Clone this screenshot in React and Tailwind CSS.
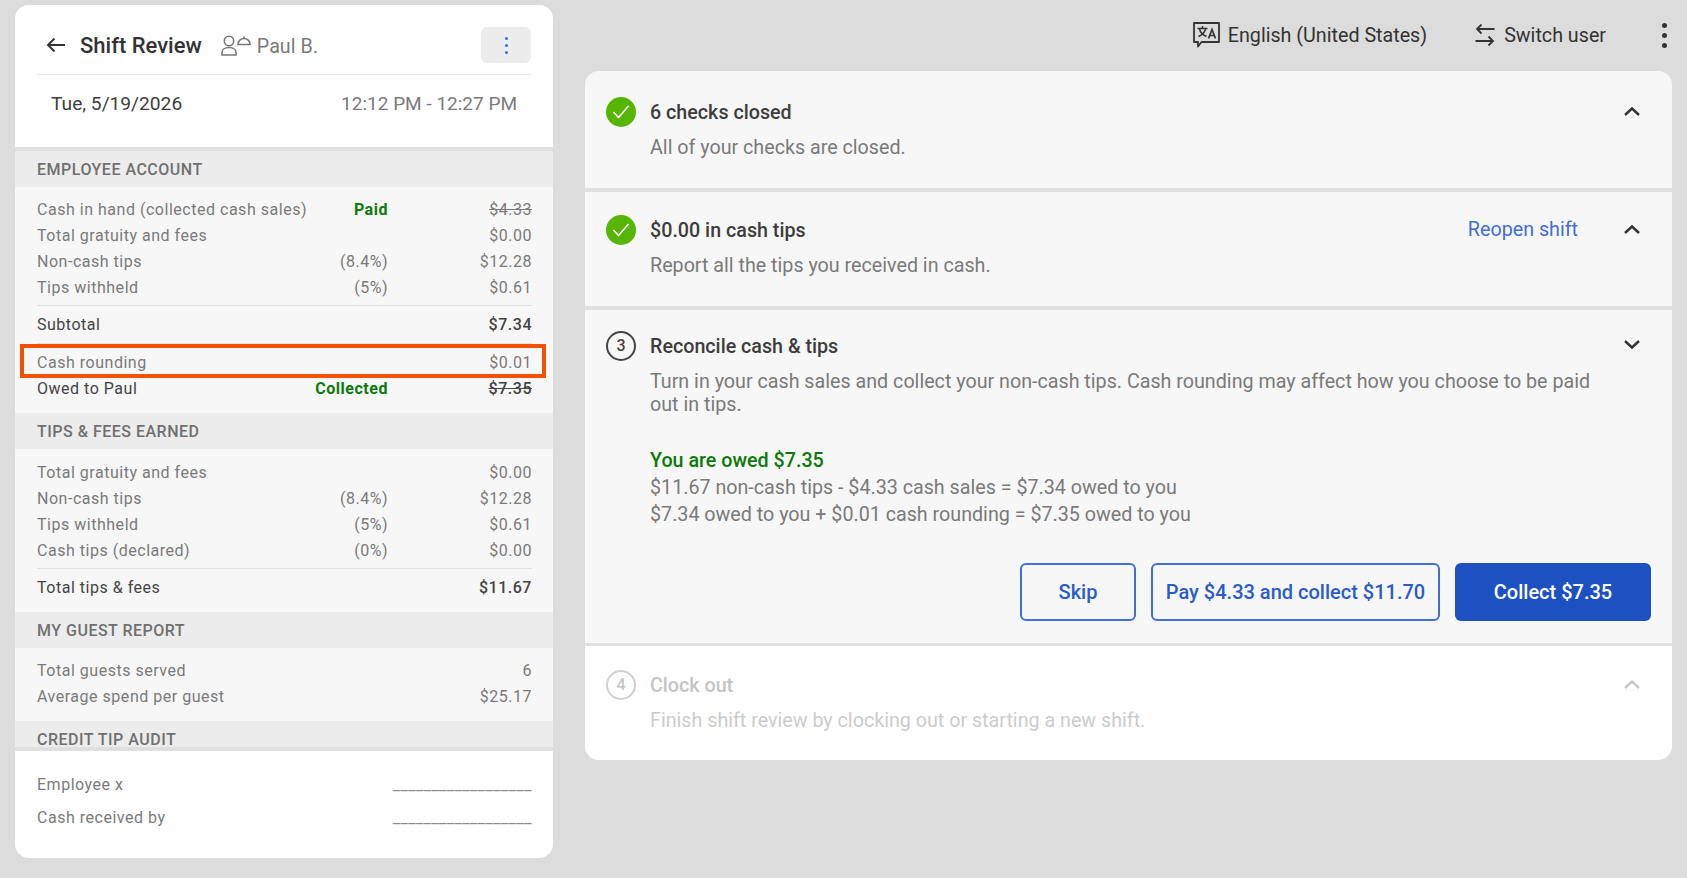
const ROW_LABEL = "text-[#7a7a7a]";

function Row({ label, mid, midClass = "", value, valueClass = "", labelClass = ROW_LABEL }) {
  return (
    <div className="flex h-[26px] items-center pl-[22px] pr-[21px] text-base tracking-[0.52px]">
      <span className={`min-w-0 flex-1 whitespace-nowrap ${labelClass}`}>{label}</span>
      <span className={`w-[120px] whitespace-nowrap text-right ${midClass || "text-[#7a7a7a]"}`}>{mid}</span>
      <span className={`w-[144px] text-right ${valueClass || "text-[#7a7a7a]"}`}>{value}</span>
    </div>
  );
}

function TotalRow({ label, value }) {
  return (
    <div className="ml-[22px] mr-[21px] flex h-[38px] items-center justify-between border-t border-[#e0e0e0] pt-[1px] text-base tracking-[0.52px] text-[#444]">
      <span>{label}</span>
      <span className="font-medium">{value}</span>
    </div>
  );
}

function SectionHead({ children }) {
  return (
    <div className="flex h-[36px] shrink-0 items-center bg-[#ececec] px-[22px] pt-[1px] text-base font-medium tracking-[0.5px] text-[#707070]">
      {children}
    </div>
  );
}

function ServerIcon() {
  return (
    <svg width="30" height="22" viewBox="0 0 30 22" fill="none" stroke="#777" strokeWidth="1.6">
      <circle cx="8" cy="7" r="4.7" />
      <path d="M1 21v-2.500c0-3 3-5 7-5s7 2 7 5V21Z" />
      <path d="M17 10.500c0-3.500 2.800-6 6-6s6 2.500 6 6Z" />
      <path d="M23 4.500V2.500" />
    </svg>
  );
}

function TranslateIcon() {
  return (
    <svg width="27" height="26" viewBox="0 0 27 26" fill="none" stroke="#333" strokeWidth="1.800">
      <path d="M1 1h25v19H8.500L5 24.500V20H1Z" strokeLinejoin="round" />
      <path d="M4.500 6.500h10M9.500 4v2.500M6.500 7c.8 3.500 3.500 6 7 7.500M12.500 7c-.8 3.500-3.500 6-7 7.500" strokeWidth="1.500" />
      <path d="M15.500 16.500l3.500-9 3.500 9M16.700 13.500h4.600" strokeWidth="1.700" />
    </svg>
  );
}

function SwapIcon() {
  return (
    <svg width="20" height="24" viewBox="0 0 20 24" fill="none" stroke="#333" strokeWidth="1.800">
      <path d="M19.500 5H2M6.500.500 2 5l4.500 4.500" />
      <path d="M.500 17H18M13.500 12.500 18 17l-4.500 4.500" />
    </svg>
  );
}

function Chevron({ up = true, color = "#333" }) {
  return (
    <svg width="16" height="10" viewBox="0 0 16 10" fill="none" stroke={color} strokeWidth="2.400">
      <path d={up ? "M1 9 8 2.500 15 9" : "M1 1l7 6.500L15 1"} />
    </svg>
  );
}

function Done() {
  return (
    <span className="flex h-[30px] w-[30px] shrink-0 items-center justify-center rounded-full bg-[#56b500]">
      <svg width="18" height="14" viewBox="0 0 18 14" fill="none" stroke="#fff" strokeWidth="1.600">
        <path d="M1.500 7 6.500 12.500 16.500 1" />
      </svg>
    </span>
  );
}

function Numbered({ n, muted }) {
  return (
    <span
      className={`flex h-[30px] w-[30px] shrink-0 items-center justify-center rounded-full border-2 text-base font-medium ${
        muted ? "border-[#d0d0d0] text-[#c4c4c4]" : "border-[#444] text-[#444]"
      }`}
    >
      {n}
    </span>
  );
}

function Step({ icon, title, sub, right, chevronUp = true, muted, className = "", children }) {
  return (
    <section className={`px-[21px] ${muted ? "bg-white" : "bg-[#f7f7f7]"} ${className}`}>
      <div className="flex items-center">
        {icon}
        <h3 className={`ml-[14px] flex-1 pt-[2px] text-[19.7px] font-medium ${muted ? "text-[#c4c4c4]" : "text-[#3d3d3d]"}`}>{title}</h3>
        {right}
        <span className="mb-[2px] ml-[46px] mr-[11px] flex w-[16px]">
          <Chevron up={chevronUp} color={muted ? "#c8c8c8" : "#333"} />
        </span>
      </div>
      <div className="pl-[44px] pt-[8px]">
        <p className={`pr-[40px] text-[19.7px] leading-[23px] ${muted ? "text-[#cccccc]" : "text-[#7a7a7a]"}`}>{sub}</p>
        {children}
      </div>
    </section>
  );
}

export default function App() {
  return (
    <div className="flex h-[878px] w-[1687px] overflow-hidden bg-[#dcdcdc] font-['Roboto',sans-serif]">
      {/* Shift receipt */}
      <aside className="relative ml-[15px] mt-[5px] flex h-[853px] w-[538px] flex-col overflow-hidden rounded-[14px] bg-white">
        <div className="h-[142px] shrink-0">
          <div className="mx-[22px] flex h-[70px] items-center border-b border-[#e6e6e6] pt-[11px]">
            <svg className="ml-[9px]" width="19" height="16" viewBox="0 0 19 16" fill="none" stroke="#333" strokeWidth="2">
              <path d="M19 8H2M8.500 1.500 2 8l6.500 6.500" />
            </svg>
            <h1 className="ml-[15px] text-[22px] font-medium text-[#333]">Shift Review</h1>
            <span className="ml-[19px]"><ServerIcon /></span>
            <span className="ml-[6px] flex-1 pt-[3px] text-[19.7px] text-[#7a7a7a]">Paul B.</span>
            <button className="flex h-[36px] w-[50px] items-center justify-center rounded-md bg-[#ececec]">
              <span className="flex flex-col gap-[4px]">
                <i className="h-[3px] w-[3px] rounded-full bg-[#3f6fd8]" />
                <i className="h-[3px] w-[3px] rounded-full bg-[#3f6fd8]" />
                <i className="h-[3px] w-[3px] rounded-full bg-[#3f6fd8]" />
              </span>
            </button>
          </div>
          <div className="flex items-center justify-between px-[36px] pt-[15px]">
            <span className="text-[19.2px] text-[#3d3d3d]">Tue, 5/19/2026</span>
            <span className="text-[19px] text-[#7a7a7a]">12:12 PM - 12:27 PM</span>
          </div>
        </div>

        <div className="h-[4px] shrink-0 bg-[#e0e0e0]" />

        <div className="h-[596px] shrink-0 overflow-hidden bg-[#f7f7f7]">
          <SectionHead>EMPLOYEE ACCOUNT</SectionHead>
          <div className="pb-[4px] pt-[10px]">
            <Row label="Cash in hand (collected cash sales)" mid="Paid" midClass="font-bold text-[#0b7a0b]" value="$4.33" valueClass="text-[#7a7a7a] line-through" />
            <Row label="Total gratuity and fees" value="$0.00" />
            <Row label="Non-cash tips" mid="(8.4%)" value="$12.28" />
            <Row label="Tips withheld" mid="(5%)" value="$0.61" />
          </div>
          <TotalRow label="Subtotal" value="$7.34" />
          <div className="ml-[22px] mr-[21px] border-t border-[#e0e0e0]" />
          <div className="pb-[11px] pt-[6px]">
            <Row label="Cash rounding" value="$0.01" />
            <Row label="Owed to Paul" labelClass="text-[#444]" mid="Collected" midClass="font-bold text-[#0b7a0b]" value="$7.35" valueClass="font-medium text-[#444] line-through" />
          </div>

          <SectionHead>TIPS &amp; FEES EARNED</SectionHead>
          <div className="pb-[4px] pt-[11px]">
            <Row label="Total gratuity and fees" value="$0.00" />
            <Row label="Non-cash tips" mid="(8.4%)" value="$12.28" />
            <Row label="Tips withheld" mid="(5%)" value="$0.61" />
            <Row label="Cash tips (declared)" mid="(0%)" value="$0.00" />
          </div>
          <TotalRow label="Total tips & fees" value="$11.67" />
          <div className="h-[6px]" />

          <SectionHead>MY GUEST REPORT</SectionHead>
          <div className="pb-[11px] pt-[10px]">
            <Row label="Total guests served" value="6" />
            <Row label="Average spend per guest" value="$25.17" />
          </div>

          <SectionHead>CREDIT TIP AUDIT</SectionHead>
        </div>

        <div className="h-[4px] shrink-0 bg-[#e0e0e0]" />

        <div className="flex flex-col gap-[7px] pl-[22px] pr-[21px] pt-[21px] text-base tracking-[0.52px] text-[#7a7a7a]">
          <div className="flex h-[26px] items-center justify-between">
            <span>Employee x</span>
            <span className="text-[#8a8a8a]">__________________</span>
          </div>
          <div className="flex h-[26px] items-center justify-between">
            <span>Cash received by</span>
            <span className="text-[#8a8a8a]">__________________</span>
          </div>
        </div>

        {/* highlight around the rounding row */}
        <div className="absolute left-[5px] top-[339px] h-[34px] w-[526px] border-4 border-[#f25100]" />
      </aside>

      <main className="ml-[32px] w-[1087px]">
        <header className="flex h-[71px] items-center text-[19.7px] text-[#333]">
          <span className="mb-[2px] ml-auto"><TranslateIcon /></span>
          <span className="ml-[8px]">English (United States)</span>
          <span className="ml-[48px]"><SwapIcon /></span>
          <span className="ml-[9px]">Switch user</span>
          <span className="ml-[56px] mr-[5px] flex flex-col gap-[5px]">
            <i className="h-[5px] w-[5px] rounded-full bg-[#333]" />
            <i className="h-[5px] w-[5px] rounded-full bg-[#333]" />
            <i className="h-[5px] w-[5px] rounded-full bg-[#333]" />
          </span>
        </header>

        <div className="overflow-hidden rounded-[14px]">
          <Step className="h-[117px] pt-[25px]" icon={<Done />} title="6 checks closed" sub="All of your checks are closed." />
          <div className="h-[4px] bg-[#e0e0e0]" />
          <Step
            className="h-[114px] pt-[22px]"
            icon={<Done />}
            title="$0.00 in cash tips"
            sub="Report all the tips you received in cash."
            right={<a className="text-[19.7px] text-[#3f6fd8]">Reopen shift</a>}
          />
          <div className="h-[4px] bg-[#e0e0e0]" />
          <Step
            className="h-[333px] pt-[20px]"
            icon={<Numbered n="3" />}
            title="Reconcile cash & tips"
            chevronUp={false}
            sub="Turn in your cash sales and collect your non-cash tips. Cash rounding may affect how you choose to be paid out in tips."
          >
            <p className="mt-[31px] text-[19.7px] font-medium leading-[27px] text-[#0b7a0b]">You are owed $7.35</p>
            <p className="text-[19.7px] leading-[27px] text-[#7a7a7a]">$11.67 non-cash tips - $4.33 cash sales = $7.34 owed to you</p>
            <p className="text-[19.7px] leading-[27px] text-[#7a7a7a]">$7.34 owed to you + $0.01 cash rounding = $7.35 owed to you</p>
            <div className="mt-[35px] flex justify-end gap-[15px] text-xl font-medium">
              <button className="h-[58px] w-[116px] rounded-md border-2 border-[#3f6fd8] text-[#2a5cc8]">Skip</button>
              <button className="h-[58px] w-[289px] rounded-md border-2 border-[#3f6fd8] text-[#2a5cc8]">Pay $4.33 and collect $11.70</button>
              <button className="h-[58px] w-[196px] rounded-md bg-[#1d50c0] text-white">Collect $7.35</button>
            </div>
          </Step>
          <div className="h-[3px] bg-[#e0e0e0]" />
          <Step
            className="h-[114px] pt-[23px]"
            muted
            icon={<Numbered n="4" muted />}
            title="Clock out"
            sub="Finish shift review by clocking out or starting a new shift."
          />
        </div>
      </main>
    </div>
  );
}
